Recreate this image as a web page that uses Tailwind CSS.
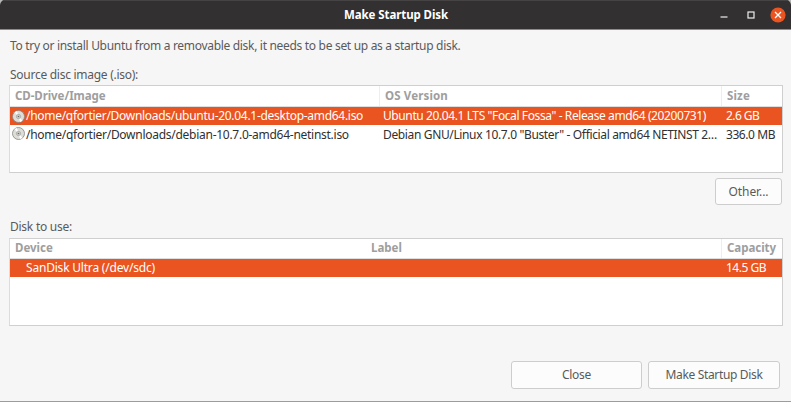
<!DOCTYPE html>
<html lang="en">
<head>
<meta charset="utf-8">
<title>Make Startup Disk</title>
<script src="https://cdn.jsdelivr.net/npm/@tailwindcss/browser@4"></script>
</head>
<body class="h-[402px] w-[791px] overflow-hidden bg-[#b8b8b8]">
<main class="flex h-[402px] flex-col overflow-hidden rounded-t-[5px] border-b border-[#9c9c9c] bg-[#f6f6f6] font-['Noto_Sans',sans-serif] text-[12px] leading-[18px] whitespace-nowrap text-[#5a5a5a]">
  <header class="grid h-[30px] shrink-0 grid-cols-[1fr_auto_1fr] items-center border-t border-b border-t-[#454344] border-b-[#8d8c8c] bg-[#323031] text-white">
    <div></div>
    <h1 class="pl-px text-[11.5px] font-bold tracking-[-0.09px]">Make Startup Disk</h1>
    <div class="flex items-center justify-end pr-[5px]">
      <svg class="mr-[19px]" width="8" height="12" viewBox="0 0 8 12"><path d="M.5 8H7.5" stroke="#eee" stroke-width="1.2"/></svg>
      <svg class="mr-[15px]" width="8" height="8" viewBox="0 0 8 8"><rect x="1" y="1" width="6" height="6" fill="none" stroke="#eee" stroke-width="1.2"/></svg>
      <svg width="16" height="16" viewBox="0 0 16 16"><circle cx="8" cy="8" r="7.6" fill="#e95420"/><path d="M5 5l6 6M11 5l-6 6" stroke="#fff" stroke-width="1.3"/></svg>
    </div>
  </header>
  <section class="flex flex-col px-[9px] pt-[7px]">
    <p class="pl-px tracking-[-0.31px]">To try or install Ubuntu from a removable disk, it needs to be set up as a startup disk.</p>
    <p class="mt-[11px] mb-[1px] pl-px tracking-[-0.27px]">Source disc image (.iso):</p>
    <div class="h-[88px] w-[774px] border border-[#cfcfcf] border-l-[#dcdcdc] bg-white text-[#303030]">
      <div class="grid h-[21px] grid-cols-[370px_342px_1fr] items-center border-b border-[#dedede] text-[11.5px] font-bold text-[#9e9e9e]">
        <div class="h-full border-r border-[#eee] pt-px pl-[5px] tracking-[-0.06px]">CD-Drive/Image</div>
        <div class="h-full border-r border-[#eee] pt-px pl-[5px] tracking-[0.14px]">OS Version</div>
        <div class="h-full pt-px pl-[5px] tracking-[0.17px]">Size</div>
      </div>
      <div class="grid h-[18px] grid-cols-[370px_342px_1fr] bg-[#e95420] text-white">
        <div class="flex items-center pl-[2px] tracking-[-0.29px]"><svg class="mr-[1px]" width="13" height="13" viewBox="0 0 13 13"><circle cx="6.5" cy="6.5" r="6" fill="#deded8" stroke="#858580" stroke-width=".8"/><path d="M6.5 6.5L2.5 2.3A6 6 0 0 1 5 1zM6.5 6.5L10.5 10.7A6 6 0 0 1 8 12z" fill="#fff"/><circle cx="6.5" cy="6.5" r="2.1" fill="#d4d4ce" stroke="#999" stroke-width=".7"/><circle cx="6.5" cy="6.5" r=".8" fill="#666"/></svg><span>/home/qfortier/Downloads/ubuntu-20.04.1-desktop-amd64.iso</span></div>
        <div class="pl-[3px] tracking-[-0.4px]">Ubuntu 20.04.1 LTS "Focal Fossa" - Release amd64 (20200731)</div>
        <div class="pl-[4px] tracking-[-0.55px]">2.6 GB</div>
      </div>
      <div class="grid h-[19px] grid-cols-[370px_342px_1fr] pt-px">
        <div class="flex items-start pl-[2px] tracking-[-0.27px]"><svg class="mt-[1px] mr-[1px]" width="13" height="13" viewBox="0 0 13 13"><circle cx="6.5" cy="6.5" r="6" fill="#deded8" stroke="#858580" stroke-width=".8"/><path d="M6.5 6.5L2.5 2.3A6 6 0 0 1 5 1zM6.5 6.5L10.5 10.7A6 6 0 0 1 8 12z" fill="#fff"/><circle cx="6.5" cy="6.5" r="2.1" fill="#d4d4ce" stroke="#999" stroke-width=".7"/><circle cx="6.5" cy="6.5" r=".8" fill="#666"/></svg><span>/home/qfortier/Downloads/debian-10.7.0-amd64-netinst.iso</span></div>
        <div class="pl-[3px] tracking-[-0.36px]">Debian GNU/Linux 10.7.0 "Buster" - Official amd64 NETINST 2…</div>
        <div class="pl-[4px] tracking-[-0.43px]">336.0 MB</div>
      </div>
    </div>
    <button class="mt-[5px] flex h-[27px] w-[67px] items-center justify-center self-end rounded-[3px] border border-[#cdcdcd] bg-[#fcfcfc] tracking-[-0.07px]">Other...</button>
    <p class="mt-[13px] mb-[2px] pl-px tracking-[-0.25px]">Disk to use:</p>
    <div class="h-[88px] w-[774px] border border-[#cfcfcf] border-l-[#dcdcdc] bg-white text-[#303030]">
      <div class="grid h-[20px] grid-cols-[356px_356px_1fr] items-center border-b border-[#dedede] text-[11.5px] font-bold text-[#9e9e9e]">
        <div class="h-full pl-[5px]">Device</div>
        <div class="h-full border-r border-[#eee] pl-[5px]">Label</div>
        <div class="h-full pl-[5px] tracking-[-0.04px]">Capacity</div>
      </div>
      <div class="grid h-[18px] grid-cols-[712px_1fr] bg-[#e95420] text-white">
        <div class="pl-[16px] tracking-[-0.2px]">SanDisk Ultra (/dev/sdc)</div>
        <div class="pl-[4px] tracking-[-0.5px]">14.5 GB</div>
      </div>
    </div>
  </section>
  <footer class="mt-auto mb-[12px] flex justify-end gap-[6px] pr-[11px]">
    <button class="h-[28px] w-[131px] rounded-[3px] border border-[#cdcdcd] bg-[#fcfcfc] tracking-[-0.29px]">Close</button>
    <button class="h-[28px] w-[132px] rounded-[3px] border border-[#cdcdcd] bg-[#fcfcfc] tracking-[-0.34px]">Make Startup Disk</button>
  </footer>
</main>
</body>
</html>
